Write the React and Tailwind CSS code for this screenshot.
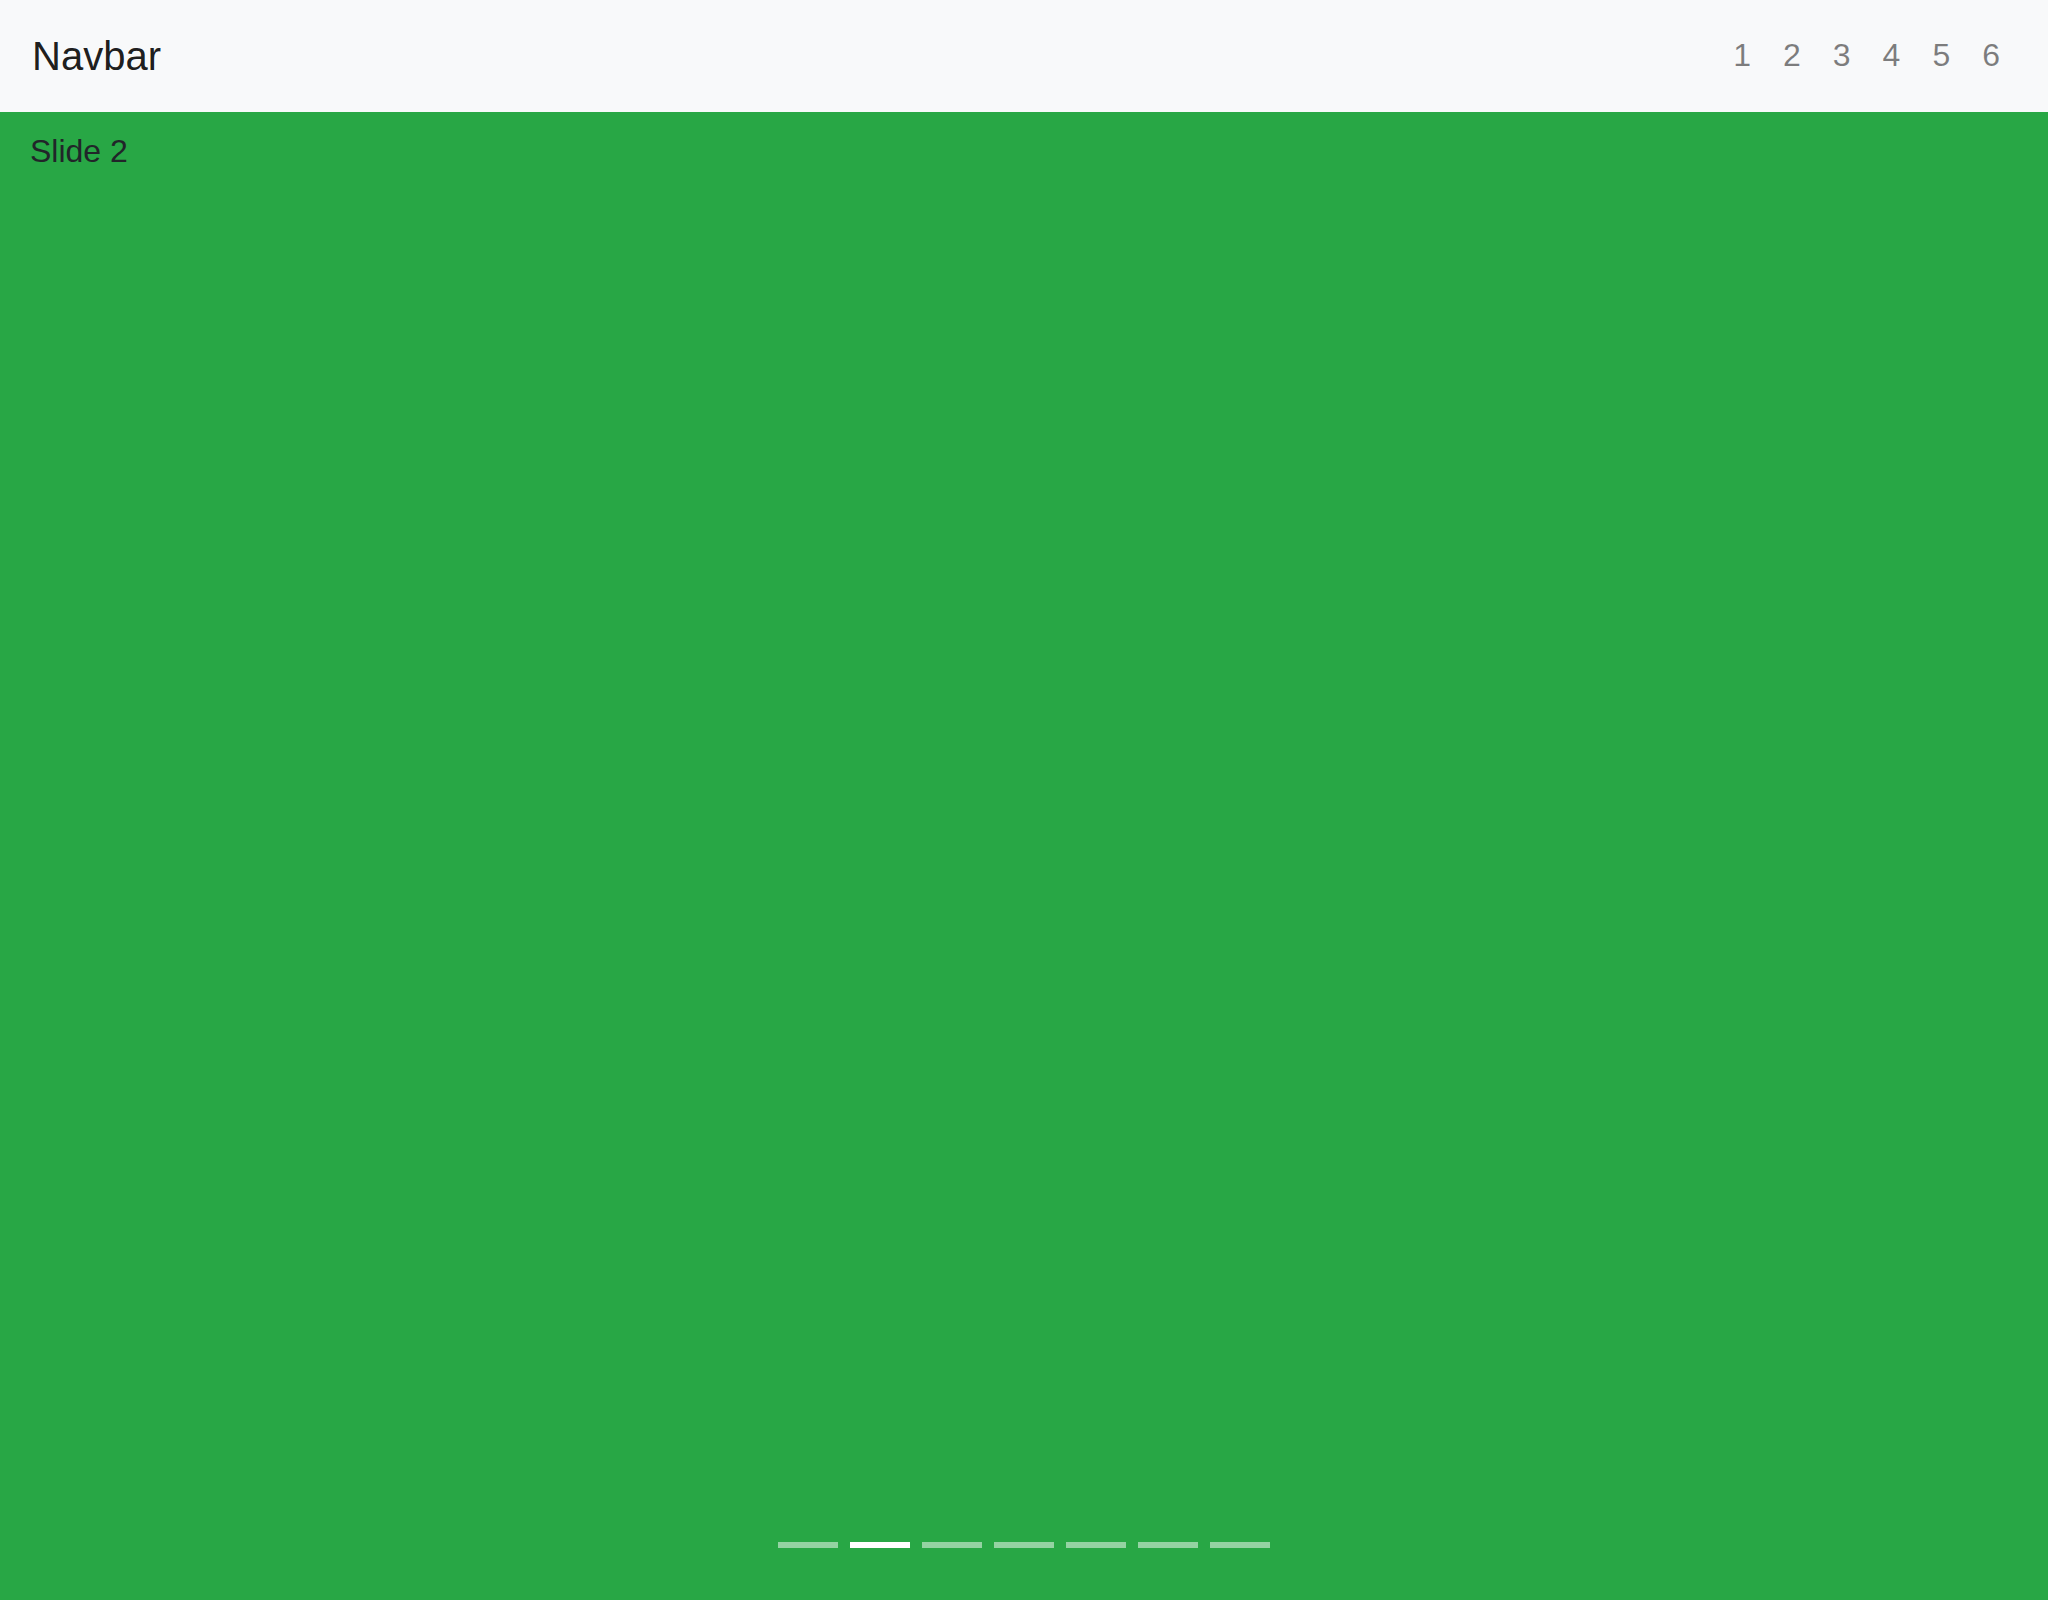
import React, { useState } from 'react';

const links = ['1', '2', '3', '4', '5', '6'];
const slides = [1, 2, 3, 4, 5, 6, 7];

const App = () => {
  const [active, setActive] = useState(1);

  return (
    <div className="w-full h-[1600px] flex flex-col font-['Liberation_Sans',Arial,sans-serif]">
      {/* Navbar */}
      <nav className="h-[112px] shrink-0 bg-[#f8f9fa] flex items-center justify-between px-[32px] py-[16px]">
        <a className="text-[40px] leading-[60px] py-[10px] text-[rgba(0,0,0,0.9)] whitespace-nowrap">Navbar</a>
        <ul className="flex items-center -mt-[2px]">
          {links.map(l => (
            <li key={l}>
              <a className="block px-[16px] py-[16px] text-[32px] leading-[48px] text-[rgba(0,0,0,0.5)]">{l}</a>
            </li>
          ))}
        </ul>
      </nav>

      {/* Carousel */}
      <div className="relative flex-1 bg-[#28a745]">
        <div className="px-[30px] pt-[15px] text-[32px] leading-[48px] text-[#212529]">
          Slide {active + 1}
        </div>
        <ol className="absolute left-0 right-0 bottom-[52px] flex justify-center gap-[12px]">
          {slides.map((s, i) => (
            <li
              key={s}
              onClick={() => setActive(i)}
              className={
                i === active
                  ? 'w-[60px] h-[6px] bg-white cursor-pointer'
                  : 'w-[60px] h-[6px] bg-white/50 cursor-pointer'
              }
            />
          ))}
        </ol>
      </div>
    </div>
  );
};

export default App;
